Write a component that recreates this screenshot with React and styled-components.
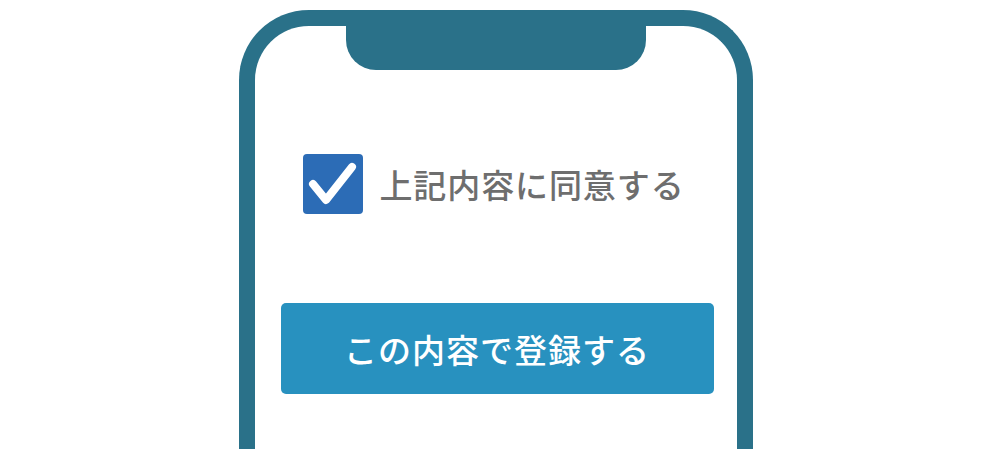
import React, { useState } from "react";
import styled, { createGlobalStyle } from "styled-components";

const GlobalStyle = createGlobalStyle`
  html, body {
    margin: 0;
    padding: 0;
    background: #ffffff;
    overflow: hidden;
  }
  * {
    box-sizing: border-box;
  }
`;

const FRAME = "#2a7189";
const FONT = `"Noto Sans CJK JP", "Noto Sans", sans-serif`;

const Stage = styled.div`
  width: 1000px;
  height: 449px;
  padding: 10px 0 0 239px;
  overflow: hidden;
`;

const Phone = styled.div`
  width: 514px;
  height: 480px;
  border: 16px solid ${FRAME};
  border-bottom: none;
  border-radius: 70px 70px 0 0;
  background: #ffffff;
  display: flex;
  flex-direction: column;
  align-items: center;
`;

const Notch = styled.div`
  width: 300px;
  height: 44px;
  flex-shrink: 0;
  background: ${FRAME};
  border-radius: 0 0 30px 30px;
`;

const AgreeRow = styled.label`
  margin-top: 84px;
  margin-right: 4px;
  display: flex;
  align-items: center;
  gap: 16px;
  cursor: pointer;
`;

const CheckBox = styled.span`
  width: 60px;
  height: 60px;
  border-radius: 4px;
  background: ${(props) => (props.checked ? "#2c6cb6" : "#ffffff")};
  border: ${(props) => (props.checked ? "none" : "3px solid #2c6cb6")};
  display: flex;
  align-items: center;
  justify-content: center;
`;

const AgreeText = styled.span`
  font-family: ${FONT};
  font-size: 33px;
  font-weight: 500;
  line-height: 1;
  color: #6e6e6e;
  letter-spacing: 0.9px;
`;

const SubmitButton = styled.button`
  margin-top: 89px;
  margin-left: 2px;
  width: 433px;
  height: 91px;
  border: none;
  border-radius: 5px;
  background: #2891bf;
  color: #ffffff;
  font-family: ${FONT};
  font-size: 33px;
  font-weight: 500;
  letter-spacing: 1px;
  cursor: pointer;
`;

const Check = () => (
  <svg width="60" height="60" viewBox="0 0 60 60">
    <path
      d="M10 30 L23 46 L49 13"
      fill="none"
      stroke="#ffffff"
      strokeWidth="8"
      strokeLinecap="round"
      strokeLinejoin="round"
    />
  </svg>
);

const App = () => {
  const [checked, setChecked] = useState(true);

  return (
    <>
      <GlobalStyle />
      <Stage>
        <Phone>
          <Notch />
          <AgreeRow onClick={() => setChecked(!checked)}>
            <CheckBox checked={checked}>{checked && <Check />}</CheckBox>
            <AgreeText>上記内容に同意する</AgreeText>
          </AgreeRow>
          <SubmitButton>この内容で登録する</SubmitButton>
        </Phone>
      </Stage>
    </>
  );
};

export default App;
